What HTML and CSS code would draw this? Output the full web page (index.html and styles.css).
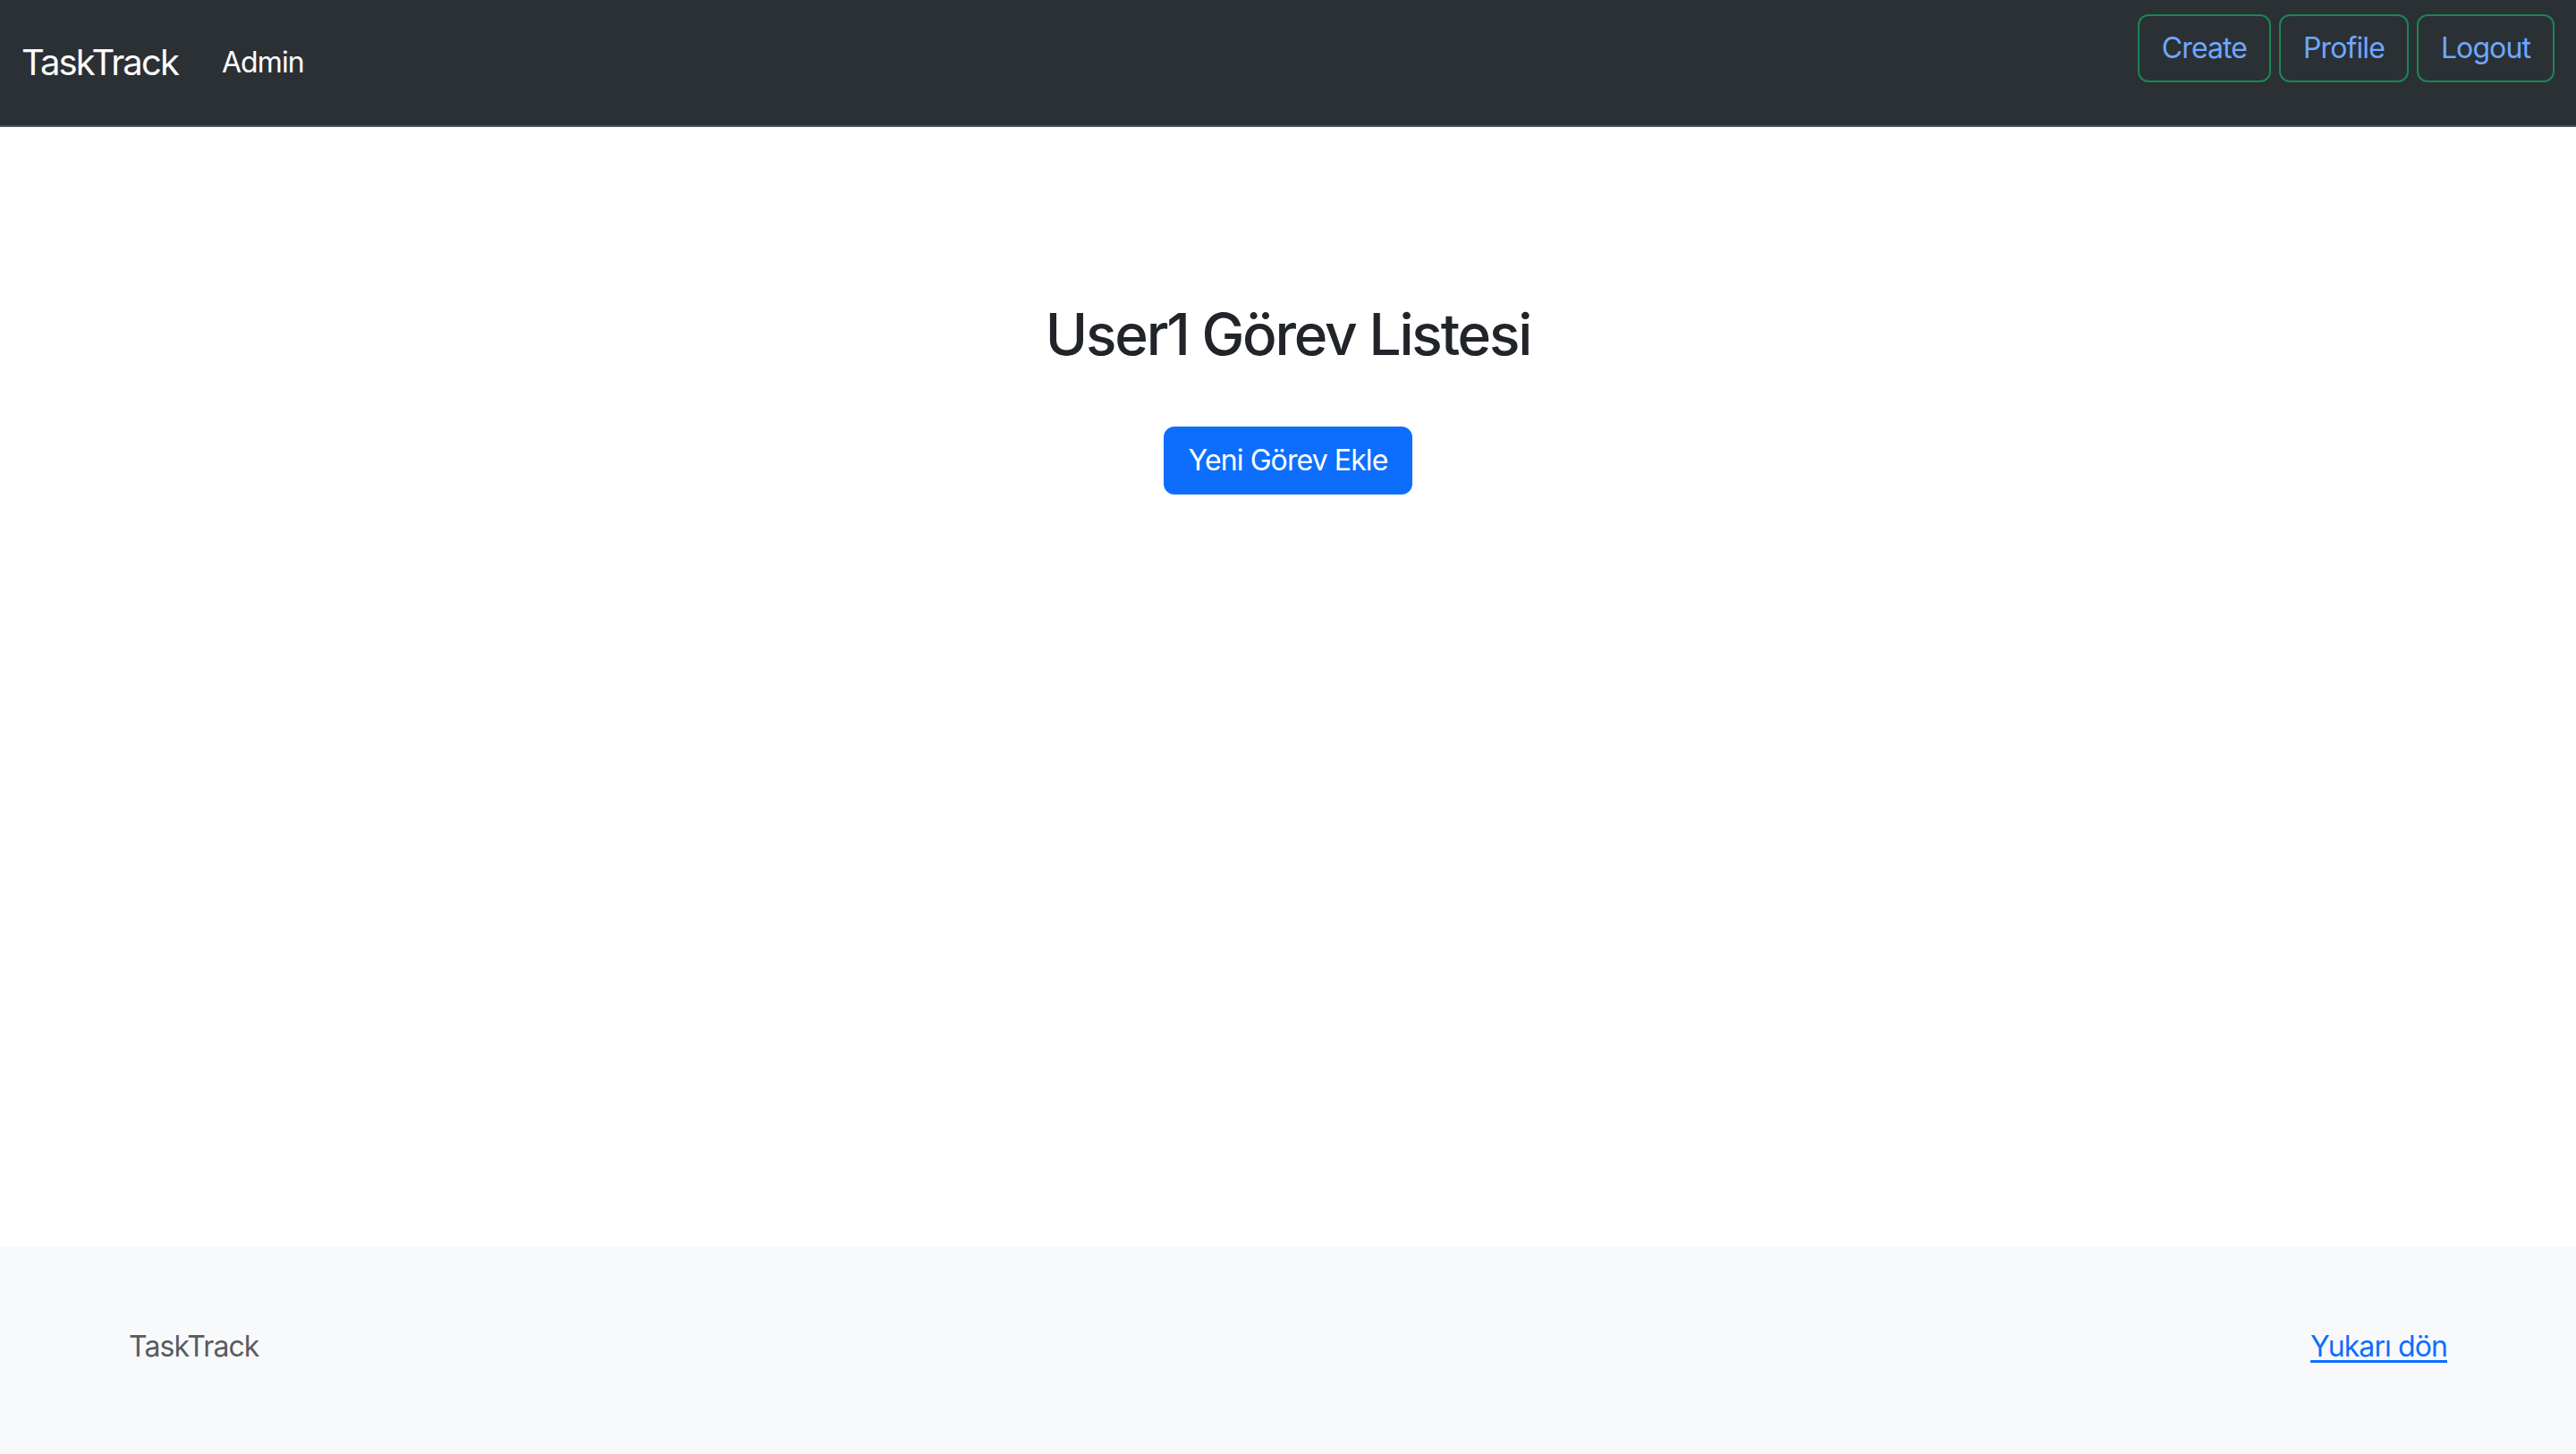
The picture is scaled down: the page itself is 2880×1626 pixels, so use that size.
FILE: index.html
```html
<!DOCTYPE html>
<html lang="tr">
<head>
<meta charset="utf-8">
<title>TaskTrack</title>
<link rel="stylesheet" href="styles.css">
</head>
<body>
<nav class="navbar">
  <div class="nav-left">
    <a class="brand" href="#">TaskTrack</a>
    <a class="nav-link" href="#">Admin</a>
  </div>
  <div class="nav-right">
    <a class="btn-outline" href="#">Create</a>
    <a class="btn-outline" href="#">Profile</a>
    <a class="btn-outline" href="#">Logout</a>
  </div>
</nav>
<main class="main">
  <h2 class="title">User1 Görev Listesi</h2>
  <a class="btn-primary" href="#">Yeni Görev Ekle</a>
</main>
<footer class="footer">
  <div class="footer-inner">
    <span class="footer-brand">TaskTrack</span>
    <a class="footer-link" href="#">Yukarı dön</a>
  </div>
</footer>
</body>
</html>
```
FILE: styles.css
```css
* { box-sizing: border-box; }
html, body { margin: 0; padding: 0; }
body {
  font-family: Inter, "Liberation Sans", sans-serif;
  font-size: 32px;
  line-height: 1.5;
  letter-spacing: -0.9px;
  color: #212529;
  background: #fff;
  min-height: 100vh;
  display: flex;
  flex-direction: column;
}
a { text-decoration: none; }

.navbar {
  height: 142px;
  background: #2b3035;
  border-bottom: 2px solid #495057;
  padding: 0 24px;
  display: flex;
  justify-content: space-between;
  align-items: flex-start;
}
.nav-left {
  display: flex;
  align-items: center;
  height: 140px;
}
.brand {
  color: #fff;
  font-size: 40px;
  margin-right: 49px;
  letter-spacing: -1.9px;
}
.nav-link {
  color: #fff;
  font-size: 32px;
}
.nav-right {
  display: flex;
  gap: 9px;
  padding-top: 16px;
}
.btn-outline {
  display: inline-block;
  height: 76px;
  padding: 12px 25px;
  border: 2px solid #198754;
  border-radius: 12px;
  color: #6ea8fe;
  font-size: 32px;
  line-height: 48px;
}

.main {
  flex: 1;
  display: flex;
  flex-direction: column;
  align-items: center;
}
.title {
  margin: 194px 0 64px;
  font-size: 64px;
  font-weight: 500;
  line-height: 1.2;
  letter-spacing: -2.2px;
}
.btn-primary {
  display: inline-block;
  height: 76px;
  padding: 12px 26px;
  background: #0d6efd;
  border: 2px solid #0d6efd;
  border-radius: 12px;
  color: #fff;
  line-height: 48px;
}

.footer {
  background: #f8f9fa;
  height: 232px;
  padding-top: 88px;
}
.footer-inner {
  width: 2640px;
  margin: 0 auto;
  padding: 0 24px;
  display: flex;
  justify-content: space-between;
}
.footer-brand { color: #595c5f; }
.footer-link {
  color: #0d6efd;
  text-decoration: underline;
  text-underline-offset: 4px;
}
```
